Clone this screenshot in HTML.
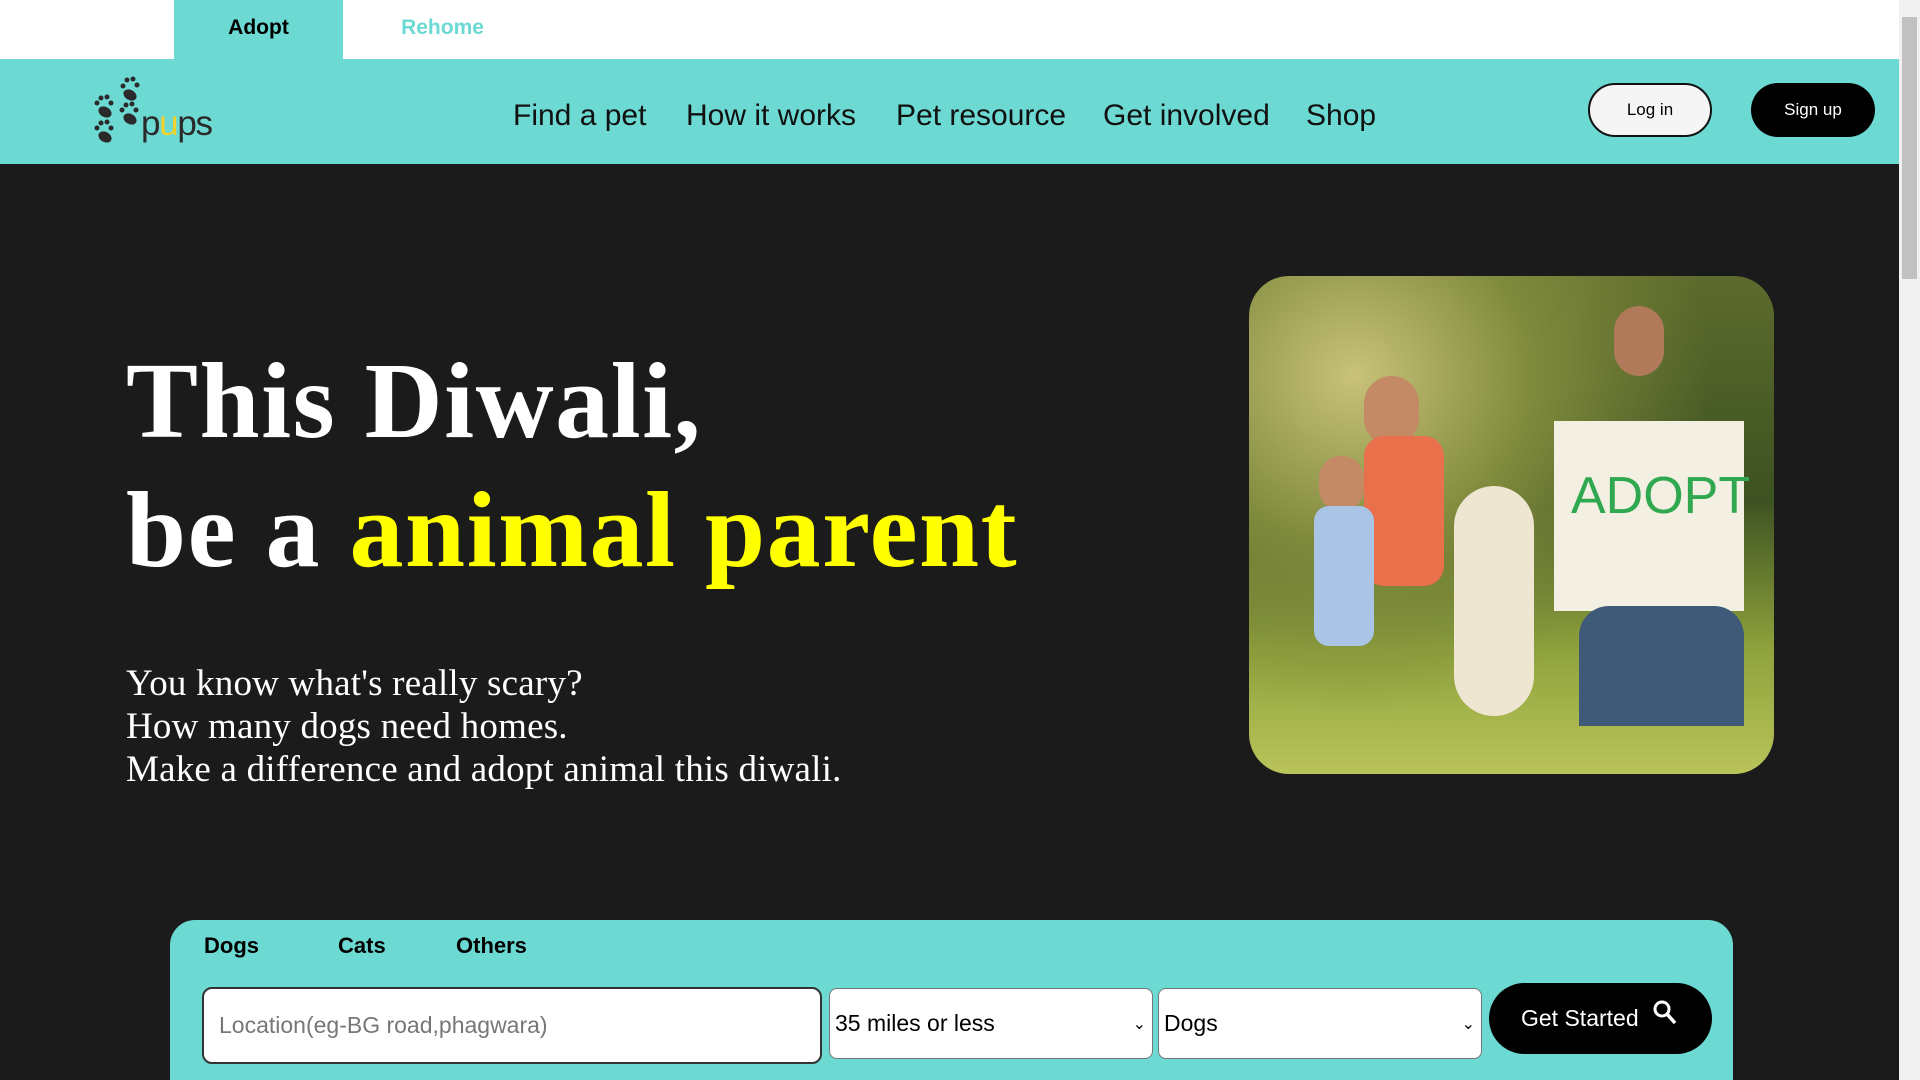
<!DOCTYPE html>
<html style="width:1920px;height:1080px;overflow:hidden"><head><style>
*{margin:0;padding:0;box-sizing:border-box}
body{width:1920px;height:1080px;overflow:hidden;background:#1b1b1b;font-family:"Liberation Sans",sans-serif;position:relative}
.top{position:absolute;left:0;top:0;width:1899px;height:59px;background:#fff}
.tab{position:absolute;top:0;height:59px;width:169px;font-weight:bold;font-size:21px;display:flex;align-items:center;justify-content:center;padding-bottom:4px}
.nav{position:absolute;left:0;top:59px;width:1899px;height:105px;background:#6cd9d3}
.nav a{position:absolute;top:40px;font-size:30px;color:#111;text-decoration:none}
.btn{position:absolute;top:24px;height:54px;border-radius:27px;font-size:17px;display:flex;align-items:center;justify-content:center}
.sb{position:absolute;right:0;top:0;width:21px;height:1080px;background:#f1f1f1}
h1{position:absolute;left:126px;font-family:"Liberation Serif",serif;font-weight:bold;font-size:108px;letter-spacing:1.5px;color:#fff;white-space:nowrap;line-height:1}
.p{position:absolute;left:126px;top:662px;font-family:"Liberation Serif",serif;font-size:37px;letter-spacing:0.2px;color:#fff;line-height:43px}
.img{position:absolute;left:1249px;top:276px;width:525px;height:498px;border-radius:40px;overflow:hidden;
background:radial-gradient(ellipse at 20% 20%,#c9c27a 0,#7f8a3c 30%,transparent 60%),linear-gradient(180deg,#5d6b2c 0,#3d5222 45%,#8fa23c 75%,#b9c45a 100%)}
.panel{position:absolute;left:170px;top:920px;width:1563px;height:160px;background:#6cd9d3;border-radius:25px 25px 0 0}
.pt{position:absolute;top:13px;font-weight:bold;font-size:22px}
.fld{position:absolute;background:#fff;border:1px solid #777;border-radius:8px;font-size:23px;display:flex;align-items:center;padding-left:5px}
</style></head><body>
<div class="top">
<div class="tab" style="left:174px;background:#6cd9d3;color:#000">Adopt</div>
<div class="tab" style="left:358px;color:#6cd9d3">Rehome</div>
</div>
<div class="nav">
<svg style="position:absolute;left:94px;top:16px" width="125" height="75" viewBox="0 0 125 75">
<g fill="#2a2a2a">
<ellipse cx="36" cy="20" rx="7" ry="5" transform="rotate(30 36 20)"/><circle cx="29" cy="11" r="2.5"/><circle cx="33" cy="5" r="2.5"/><circle cx="39" cy="4" r="2.5"/><circle cx="43" cy="10" r="2.5"/>
<ellipse cx="11" cy="37" rx="7" ry="5" transform="rotate(30 11 37)"/><circle cx="3" cy="28" r="2.5"/><circle cx="7" cy="23" r="2.5"/><circle cx="13" cy="22" r="2.5"/><circle cx="17" cy="28" r="2.5"/>
<ellipse cx="36" cy="44" rx="7" ry="5" transform="rotate(30 36 44)"/><circle cx="28" cy="35" r="2.5"/><circle cx="32" cy="30" r="2.5"/><circle cx="38" cy="29" r="2.5"/><circle cx="42" cy="35" r="2.5"/>
<ellipse cx="11" cy="62" rx="7" ry="5" transform="rotate(30 11 62)"/><circle cx="3" cy="53" r="2.5"/><circle cx="7" cy="48" r="2.5"/><circle cx="13" cy="47" r="2.5"/><circle cx="17" cy="53" r="2.5"/>
</g>
<text x="47" y="60" font-family="Liberation Sans,sans-serif" font-size="35" fill="#2a2a2a" textLength="72">p<tspan fill="#f5d22a">u</tspan>ps</text>
</svg>
<a style="left:513px">Find a pet</a>
<a style="left:686px">How it works</a>
<a style="left:896px">Pet resource</a>
<a style="left:1103px">Get involved</a>
<a style="left:1306px">Shop</a>
<div class="btn" style="left:1588px;width:124px;background:#f5f5f5;border:2px solid #111">Log in</div>
<div class="btn" style="left:1751px;width:124px;background:#000;color:#fff">Sign up</div>
</div>
<div class="sb"><div style="position:absolute;left:3px;top:17px;width:15px;height:262px;background:#c1c1c1"></div></div>
<h1 style="top:348px">This Diwali,</h1>
<h1 style="top:477px">be a <span style="color:#ffff00">animal parent</span></h1>
<div class="p">You know what's really scary?<br>How many dogs need homes.<br>Make a difference and adopt animal this diwali.</div>
<div class="img">
<div style="position:absolute;left:305px;top:145px;width:190px;height:190px;background:#f3efe2"></div>
<div style="position:absolute;left:322px;top:190px;font-size:52px;color:#2fa84f;font-family:'Liberation Sans',sans-serif">ADOPT</div>
<div style="position:absolute;left:365px;top:30px;width:50px;height:70px;border-radius:25px;background:#b07a5a"></div>
<div style="position:absolute;left:330px;top:330px;width:165px;height:120px;border-radius:30px 30px 0 0;background:#3e5a78"></div>
<div style="position:absolute;left:205px;top:210px;width:80px;height:230px;border-radius:40px;background:#efe6d2"></div>
<div style="position:absolute;left:115px;top:100px;width:55px;height:70px;border-radius:28px;background:#c48a66"></div>
<div style="position:absolute;left:115px;top:160px;width:80px;height:150px;border-radius:20px;background:#e8704a"></div>
<div style="position:absolute;left:70px;top:180px;width:45px;height:55px;border-radius:22px;background:#c48a66"></div>
<div style="position:absolute;left:65px;top:230px;width:60px;height:140px;border-radius:15px;background:#a9c4e4"></div>
</div>
<div class="panel">
<div class="pt" style="left:34px">Dogs</div>
<div class="pt" style="left:168px">Cats</div>
<div class="pt" style="left:286px">Others</div>
<div class="fld" style="left:32px;top:67px;width:620px;height:77px;border:2px solid #333;border-radius:10px;color:#777;padding-left:15px">Location(eg-BG road,phagwara)</div>
<div class="fld" style="left:659px;top:68px;width:324px;height:71px">35 miles or less<span style="position:absolute;right:6px;font-size:16px">&#8964;</span></div>
<div class="fld" style="left:988px;top:68px;width:324px;height:71px">Dogs<span style="position:absolute;right:6px;font-size:16px">&#8964;</span></div>
<div style="position:absolute;left:1319px;top:63px;width:223px;height:71px;background:#000;border-radius:36px;color:#fff;font-size:23px;display:flex;align-items:center;padding-left:32px">Get Started
<svg style="margin-left:14px;margin-top:-12px" width="24" height="26" viewBox="0 0 24 26"><circle cx="9" cy="9" r="7" stroke="#fff" stroke-width="3" fill="none"/><path d="M14 14l8 9" stroke="#fff" stroke-width="3.5"/></svg></div>
</div>
</body></html>
